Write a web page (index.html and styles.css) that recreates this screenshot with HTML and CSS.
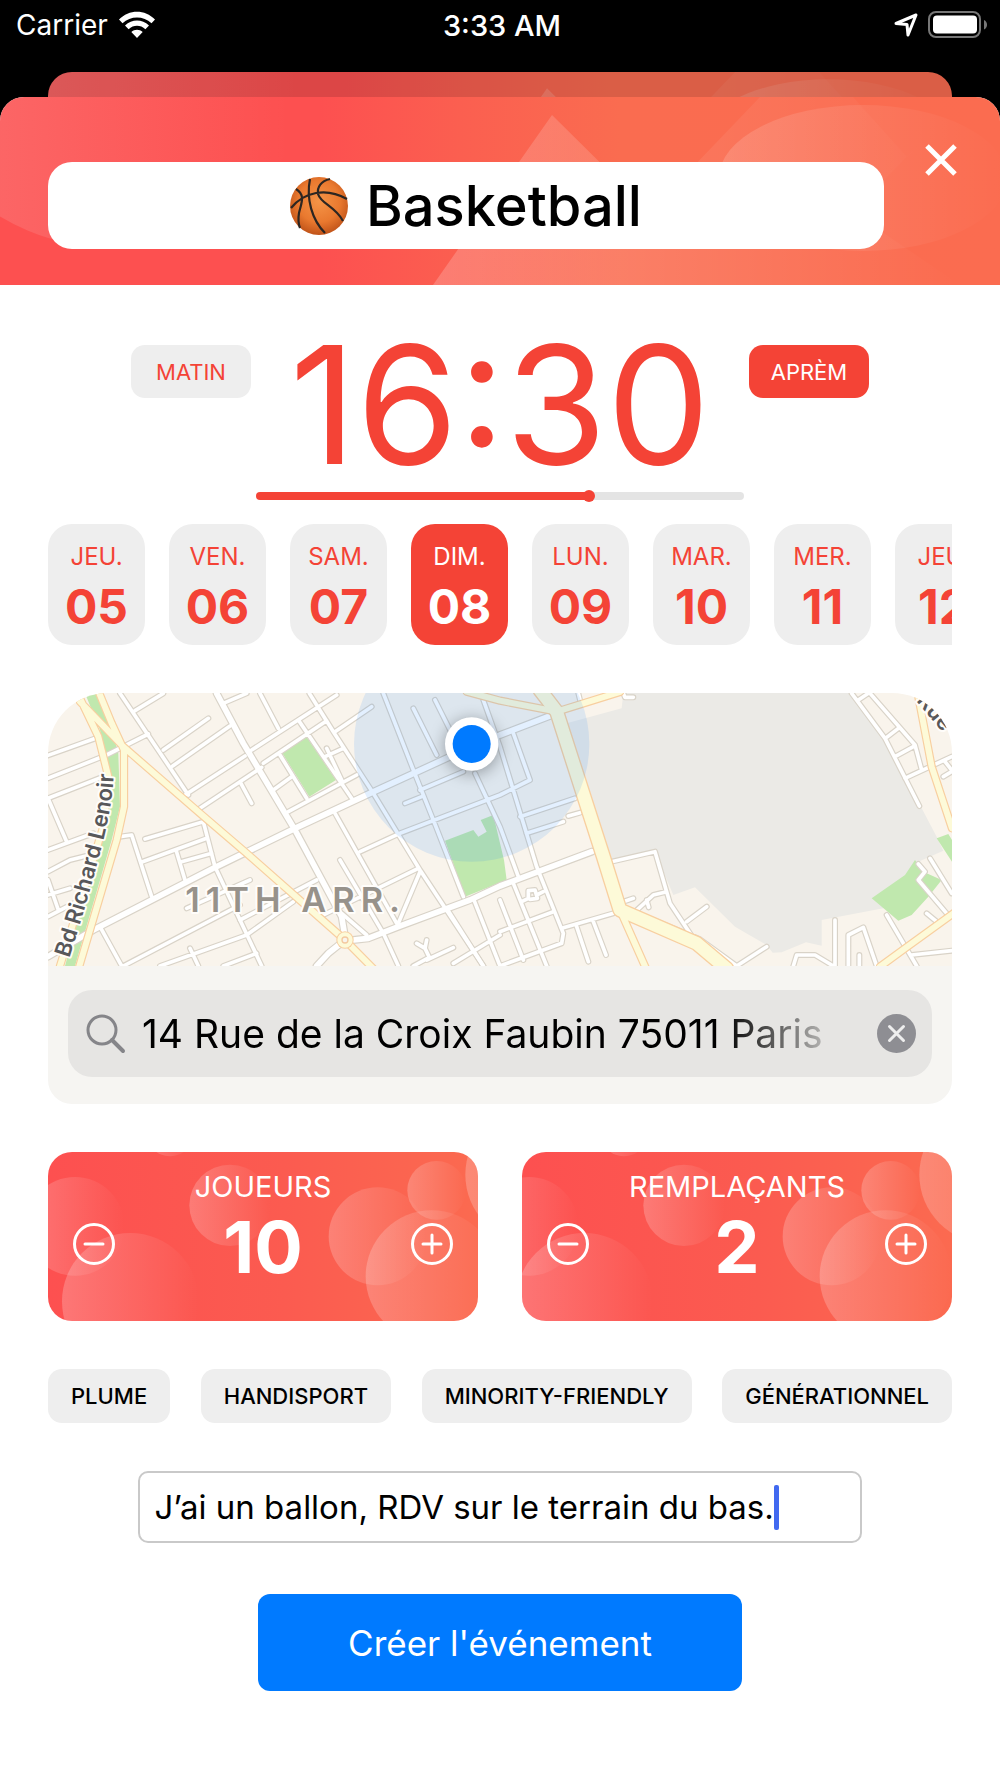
FILE: index.html
```html
<!DOCTYPE html>
<html lang="fr">
<head>
<meta charset="utf-8">
<meta name="viewport" content="width=device-width, initial-scale=1">
<title>Créer un événement</title>
<link rel="stylesheet" href="styles.css">
</head>
<body>
<svg class="defs" aria-hidden="true">
  <defs>
    <linearGradient id="base"><stop offset="0" stop-color="#fd5050"/><stop offset=".32" stop-color="#fd5050"/><stop offset=".46" stop-color="#fb5f50"/><stop offset=".62" stop-color="#fa6c50"/><stop offset="1" stop-color="#fb6c50"/></linearGradient>
    <linearGradient id="sheen"><stop offset="0" stop-color="#fff" stop-opacity=".22"/><stop offset="1" stop-color="#fff" stop-opacity="0"/></linearGradient>
    <linearGradient id="haze" gradientUnits="userSpaceOnUse" x1="0" y1="0" x2="290" y2="0"><stop offset="0" stop-color="#f4f4f4" stop-opacity=".13"/><stop offset="1" stop-color="#f4f4f4" stop-opacity="0"/></linearGradient>
    <linearGradient id="soft"><stop offset="0" stop-color="#fff" stop-opacity=".08"/><stop offset="1" stop-color="#fff" stop-opacity="0"/></linearGradient>
    <linearGradient id="glow"><stop offset="0" stop-color="#fff" stop-opacity=".15"/><stop offset="1" stop-color="#fff" stop-opacity="0"/></linearGradient>
    <linearGradient id="slope" gradientUnits="userSpaceOnUse" x1="433" y1="0" x2="960" y2="0"><stop offset="0" stop-color="#fff" stop-opacity=".2"/><stop offset="1" stop-color="#fff" stop-opacity="0"/></linearGradient>
    <symbol id="banner" viewBox="0 0 1000 188" preserveAspectRatio="xMidYMin slice">
      <rect width="1000" height="188" fill="url(#base)"/>
      <circle cx="110" cy="-64" r="214" fill="url(#haze)"/>
      <path d="M552 18L433 188H960L860 120H655Z" fill="url(#slope)"/>
      <path d="M760 0L645 120H848L965 0L907 60L853 0Z" fill="url(#soft)"/>
      <ellipse cx="863" cy="81" rx="144" ry="73" fill="url(#glow)"/>
    </symbol>
    <g id="bubbles" fill="url(#sheen)">
      <circle cx="105" cy="260" r="148"/>
      <circle cx="271" cy="485" r="205"/>
      <circle cx="390" cy="-20" r="70"/>
      <circle cx="570" cy="197" r="122"/>
      <circle cx="1013" cy="290" r="147"/>
      <circle cx="1190" cy="152" r="88"/>
      <circle cx="1175" cy="410" r="198"/>
      <circle cx="1482" cy="105" r="206"/>
    </g>
  </defs>
</svg>

<div class="status">
  <div class="status-left">
    <span>Carrier</span>
    <svg width="38" height="28" viewBox="0 0 38 28" aria-hidden="true">
      <path fill="#fff" d="M1 8.500C11-2 27-2 37 8.500L33.500 12.200C25.500 4.500 12.500 4.500 4.500 12.200ZM7 14.600C14 7.800 24 7.800 31 14.600L27.400 18.200C22.500 13.600 15.500 13.600 10.600 18.200ZM13.300 21C16.600 17.900 21.400 17.900 24.700 21L19 27Z"/>
    </svg>
  </div>
  <time class="status-time">3:33 AM</time>
  <div class="status-right">
    <svg width="24" height="24" viewBox="0 0 24 24" aria-hidden="true"><path d="M2 10.500L22 2L14 22L13 11.500Z" fill="none" stroke="#fff" stroke-width="3" stroke-linejoin="round"/></svg>
    <svg width="60" height="28" viewBox="0 0 60 28" aria-hidden="true"><rect x="1" y="1" width="51" height="25" rx="7" fill="none" stroke="#777" stroke-width="2"/><rect x="5" y="4.500" width="44" height="18" rx="4" fill="#fff"/><path d="M56 9c4 1.500 4 8 0 9.500z" fill="#777"/></svg>
  </div>
</div>

<div class="sheet-behind"><svg class="art" aria-hidden="true"><use href="#banner"/></svg></div>

<div class="sheet">
  <header class="sheet-head">
    <svg class="art" aria-hidden="true"><use href="#banner"/></svg>
    <h1 class="title">
      <svg width="58" height="58" viewBox="0 0 58 58" aria-hidden="true">
        <defs><radialGradient id="ball" cx=".5" cy=".42" r=".6"><stop offset="0" stop-color="#f59447"/><stop offset=".6" stop-color="#e9792f"/><stop offset="1" stop-color="#bd5017"/></radialGradient></defs>
        <circle cx="29" cy="29" r="29" fill="url(#ball)"/>
        <path fill="none" stroke="#2c2622" stroke-width="2.200" d="M1 31C14 15 36 10 57 22M20 2C16 22 22 43 35 56M40 2C31 4 27 10 28 17C31 27 45 29 53 44M6 12C16 18 11 27 9 36C8 42 8 46 10 51"/>
      </svg>
      <span>Basketball</span>
    </h1>
    <button class="close" type="button" aria-label="Fermer">
      <svg width="32" height="32" viewBox="0 0 32 32" aria-hidden="true"><path d="M2 2L30 30M30 2L2 30" stroke="#fff" stroke-width="5"/></svg>
    </button>
  </header>

  <main class="form">
    <section class="when">
      <button class="half" type="button" aria-pressed="false">MATIN</button>
      <time class="clock">16:30</time>
      <button class="half selected" type="button" aria-pressed="true">APRÈM</button>
    </section>
    <input class="slider" type="range" min="0" max="24" step="0.5" value="16.5" aria-label="Heure">

    <div class="days">
      <button class="day" type="button"><span>JEU.</span><b>05</b></button>
      <button class="day" type="button"><span>VEN.</span><b>06</b></button>
      <button class="day" type="button"><span>SAM.</span><b>07</b></button>
      <button class="day selected" type="button" aria-pressed="true"><span>DIM.</span><b>08</b></button>
      <button class="day" type="button"><span>LUN.</span><b>09</b></button>
      <button class="day" type="button"><span>MAR.</span><b>10</b></button>
      <button class="day" type="button"><span>MER.</span><b>11</b></button>
      <button class="day" type="button"><span>JEU.</span><b>12</b></button>
    </div>

    <section class="place">
      <svg class="map" viewBox="24 39 2712 819" preserveAspectRatio="xMidYMid slice" role="img" aria-label="Plan du 11e arrondissement">
        <defs>
          <g id="minor">
            <path d="M240 40L445 345M285 92L370 40M24 226L175 172M24 295L200 225L325 162M24 355L190 290M370 210L505 115M398 258L570 138M435 345L615 228M480 385L665 262M550 70L620 40M660 40L715 145M635 210L890 45M670 250L860 122M808 40L880 155L1000 340L1140 570L1330 858M885 155L995 80M775 120L935 355M720 225L800 355M860 205L905 300M855 230L910 205M745 395L950 285M700 330L755 290M600 305L635 370M315 477L490 425L525 560L665 858M308 545L500 475M425 545L515 520M408 510L435 600M240 470L275 465L335 650"/>
            <path d="M24 355L80 485M24 510L160 460M24 575L90 540L150 525M24 600L55 690M24 645L90 625M24 710L110 665M250 858L600 675M180 740L245 858M440 685L630 600M360 858L620 765L760 665M600 720L830 600M450 805L475 858M550 858L650 820M885 400L1070 730M900 540L1030 760L1075 858M905 700L980 765M960 515L1080 460L1380 345L1470 300L1420 160M840 710L1135 565M1140 575L1075 730M1120 85L1190 225M1185 60L1260 210M1030 40L1120 270L1180 420L1270 650M1305 280L1380 440L1435 590M1330 60L1380 200L1490 560L1570 760L1565 790L1380 858M1140 330L1270 275M1095 370L1145 350M1300 655L1380 858M1220 685L1330 858M1160 840L1240 803M1240 850L1380 765M1130 790L1155 805L1160 780M1155 805L1168 832L1120 858"/>
            <path transform="translate(1380 0)" d="M60 410L225 355M80 460L190 425M205 408L240 398M0 660L70 840M40 610L140 858M0 755L160 695M65 665L85 655L85 632L105 630L112 655L90 658M110 645L130 635M185 745L340 700M230 740L265 845M280 725L318 825M335 545L465 515L510 670L580 775M370 665L400 655M400 700L460 645L500 635M440 660L446 682M560 725L620 680M400 695L600 778L710 858L800 800M1005 720V858M1045 858V765L1090 742L1130 858M1078 825V858M880 858L890 825H945L1000 858M1055 40L1155 175L1258 378M1110 40L1245 195L1265 270M1075 60L1105 40M1160 172L1195 145M1185 230L1240 200M1215 295L1355 230M1330 290L1355 275M1335 245L1355 270M370 40L375 52H400M1290 535L1355 640M1255 552L1275 575L1255 600L1340 700M1160 705L1250 858M1235 825L1355 812M1280 700L1310 725M235 40L240 60"/>
          </g>
          <g id="medium">
            <path d="M24 830L160 750L520 565L765 445L990 340L1230 230L1380 165L1550 100M530 40L610 190L765 450L905 710L915 770M940 780L985 775L1075 740L1290 660L1380 618L1655 515M915 780L865 820L830 858"/>
          </g>
          <g id="major">
            <path d="M120 55L175 170L205 290L190 440L60 858M178 40L215 130L252 210V380L230 480L118 858M120 65L250 200L480 400L620 520L915 780L1000 866M1280 35L1380 62L1550 95L1740 36M2635 50L2675 260L2736 445M2740 700L2595 805L2520 860M1740 690L1820 870"/>
          </g>
          <g id="artery">
            <path d="M1500 30L1550 95L1690 530L1740 690L1970 790L2060 866"/>
          </g>
        </defs>
        <rect class="land" x="24" y="39" width="2712" height="819"/>
        <path class="estate" transform="translate(1380 0)" d="M370 38H1050L1155 175L1310 470L1330 512L1255 545L1150 685L965 720V797L918 787L845 817L818 818L800 795L705 740L585 622L520 645L465 515L330 545L200 130L365 85Z"/>
        <path class="park" d="M135 40H178L210 130L235 220L240 380L215 480L105 858H75L170 500L215 300L180 150ZM727 220L800 170L888 300L808 350ZM1215 482L1300 450L1315 470L1340 455L1322 420L1360 405L1392 540L1400 600L1275 650ZM2495 655L2595 585L2625 540L2650 575L2705 600L2665 650L2615 705L2575 722ZM2690 475L2725 462L2736 480V545Z"/>
        <use class="minor-edge" href="#minor"/><use class="medium-edge" href="#medium"/>
        <use class="minor-fill" href="#minor"/><use class="medium-fill" href="#medium"/>
        <use class="major-edge" href="#major"/><use class="artery-edge" href="#artery"/>
        <use class="major-fill" href="#major"/><use class="artery-fill" href="#artery"/>
        <circle class="roundabout-edge" cx="915" cy="780" r="26"/>
        <circle class="roundabout" cx="915" cy="780" r="18"/>
        <circle class="roundabout-core" cx="915" cy="780" r="9"/>
        <circle class="accuracy" cx="1295" cy="192" r="353"/>
        <path id="boulevard" d="M88 835Q150 640 190 480T218 220" fill="none"/>
        <text class="street"><textPath href="#boulevard">Bd Richard Lenoir</textPath></text>
        <text class="street" transform="translate(2628 62) rotate(50)">Rue</text>
        <text class="district" x="436" y="697">11TH ARR.</text>
        <circle class="pin-ring" cx="1295" cy="192" r="80"/>
        <circle class="pin" cx="1295" cy="192" r="57"/>
      </svg>
      <div class="search-panel">
        <div class="search">
          <svg width="40" height="40" viewBox="0 0 40 40" aria-hidden="true"><circle cx="16" cy="16" r="14" fill="none" stroke="#858589" stroke-width="3"/><path d="M26 26L37 37" stroke="#858589" stroke-width="4" stroke-linecap="round"/></svg>
          <input class="address" type="text" aria-label="Adresse" value="14 Rue de la Croix Faubin 75011 Paris">
          <button class="clear" type="button" aria-label="Effacer"><svg width="39" height="39" viewBox="0 0 39 39" aria-hidden="true"><circle cx="19.500" cy="19.500" r="19.500" fill="#8e8e93"/><path d="M12.500 12.500L26.500 26.500M26.500 12.500L12.500 26.500" stroke="#eee" stroke-width="3" stroke-linecap="round"/></svg></button>
        </div>
      </div>
    </section>

    <div class="counters">
      <section class="counter">
        <svg class="art" viewBox="24 37 1290 507" preserveAspectRatio="xMidYMid slice" aria-hidden="true"><use href="#bubbles"/></svg>
        <button class="step" type="button" aria-label="Moins de joueurs"><svg width="42" height="42" viewBox="0 0 42 42" aria-hidden="true"><circle cx="21" cy="21" r="19.500"/><path d="M12 21H30"/></svg></button>
        <div class="amount"><h2>JOUEURS</h2><output>10</output></div>
        <button class="step" type="button" aria-label="Plus de joueurs"><svg width="42" height="42" viewBox="0 0 42 42" aria-hidden="true"><circle cx="21" cy="21" r="19.500"/><path d="M12 21H30M21 12V30"/></svg></button>
      </section>
      <section class="counter">
        <svg class="art" viewBox="84 37 1290 507" preserveAspectRatio="xMidYMid slice" aria-hidden="true"><use href="#bubbles"/></svg>
        <button class="step" type="button" aria-label="Moins de remplaçants"><svg width="42" height="42" viewBox="0 0 42 42" aria-hidden="true"><circle cx="21" cy="21" r="19.500"/><path d="M12 21H30"/></svg></button>
        <div class="amount"><h2>REMPLAÇANTS</h2><output>2</output></div>
        <button class="step" type="button" aria-label="Plus de remplaçants"><svg width="42" height="42" viewBox="0 0 42 42" aria-hidden="true"><circle cx="21" cy="21" r="19.500"/><path d="M12 21H30M21 12V30"/></svg></button>
      </section>
    </div>

    <div class="tags">
      <button class="tag" type="button">PLUME</button>
      <button class="tag" type="button">HANDISPORT</button>
      <button class="tag" type="button">MINORITY-FRIENDLY</button>
      <button class="tag" type="button">GÉNÉRATIONNEL</button>
    </div>

    <div class="note">
      <input class="note-input" type="text" aria-label="Commentaire" value="J’ai un ballon, RDV sur le terrain du bas."><span class="caret"></span>
    </div>

    <button class="submit" type="submit">Créer l'événement</button>
  </main>
</div>
</body>
</html>
```
FILE: styles.css
```css
:root {
  --red: #f44336;
  --grey: #eeeeee;
  --blue: #007aff;
}

* { box-sizing: border-box; }

body {
  margin: 0;
  background: #000;
  color: #000;
  font-family: Inter, "Liberation Sans", sans-serif;
}

button, input {
  margin: 0;
  padding: 0;
  border: 0;
  background: none;
  color: inherit;
  font: inherit;
}

h1, h2 { margin: 0; font-weight: 400; }
svg { display: block; flex: none; }
.defs { position: absolute; width: 0; height: 0; }

/* Decorative layer behind a header or card */
.art {
  position: absolute;
  inset: 0;
  width: 100%;
  height: 100%;
}

/* Status bar */
.status {
  display: grid;
  grid-template-columns: 1fr auto 1fr;
  align-items: center;
  height: 50px;
  margin-bottom: 22px;
  padding: 0 12px 0 16px;
  color: #fff;
  font-size: 28px;
}
.status-left, .status-right { display: flex; align-items: center; gap: 10px; }
.status-right { justify-content: flex-end; }
.status-time { font-size: 29px; font-weight: 500; }

/* Sheets */
.sheet-behind {
  position: relative;
  height: 25px;
  margin: 0 48px;
  border-radius: 24px 24px 0 0;
  overflow: hidden;
  filter: brightness(.87);
}
.sheet-behind .art { height: 170px; }
.sheet {
  min-height: calc(100vh - 97px);
  border-radius: 24px 24px 0 0;
  background: #fff;
  overflow: hidden;
}
.sheet-head {
  position: relative;
  display: flex;
  align-items: flex-start;
  padding: 65px 43px 36px 48px;
}
.title {
  position: relative;
  flex: 1;
  display: flex;
  align-items: center;
  justify-content: center;
  gap: 18px;
  height: 87px;
  border-radius: 24px;
  background: #fff;
  font-size: 56px;
  font-weight: 500;
}
.close { position: relative; margin: -18px 0 0 41px; }

/* Form */
.form {
  display: flex;
  flex-direction: column;
  padding: 60px 48px 87px;
}
.selected { background: var(--red) !important; color: #fff !important; }

.when {
  display: flex;
  justify-content: space-between;
  align-items: flex-start;
  width: 100%;
  max-width: 738px;
  margin: 0 auto;
}
.half {
  width: 120px;
  height: 53px;
  border-radius: 14px;
  background: var(--grey);
  color: var(--red);
  font-size: 22px;
}
.clock {
  color: var(--red);
  font-size: 164px;
  font-weight: 400;
  line-height: 120px;
}
.slider {
  appearance: none;
  align-self: center;
  width: 54%;
  height: 12px;
  margin: 25px 0 22px;
}
.slider::-webkit-slider-runnable-track {
  height: 8px;
  border-radius: 4px;
  background: linear-gradient(to right, var(--red) 68%, #e4e4e4 68%);
}
.slider::-webkit-slider-thumb {
  appearance: none;
  width: 12px;
  height: 12px;
  margin-top: -2px;
  border-radius: 50%;
  background: var(--red);
}

.days { display: flex; gap: 24px; overflow: hidden; }
.day {
  flex: none;
  display: flex;
  flex-direction: column;
  align-items: center;
  width: 97px;
  height: 121px;
  padding-top: 17px;
  border-radius: 24px;
  background: var(--grey);
  color: var(--red);
}
.day span { font-size: 24px; line-height: 32px; }
.day b { font-size: 48px; line-height: 68px; }

/* Place */
.place {
  margin-top: 48px;
  border-radius: 60px 60px 24px 24px;
  overflow: hidden;
}
.map { width: 100%; height: 273px; }
.land { fill: #f9f4ec; }
.estate { fill: #ebeae6; }
.park { fill: #c0e8ae; }
.map use { fill: none; stroke-linejoin: round; stroke-linecap: round; }
.minor-edge { stroke: #d9d3c8; stroke-width: 18; }
.minor-fill { stroke: #fff; stroke-width: 11; }
.medium-edge { stroke: #d9d3c8; stroke-width: 24; }
.medium-fill { stroke: #fff; stroke-width: 17; }
.major-edge { stroke: #f8cfa0; stroke-width: 25; }
.major-fill { stroke: #fdfad8; stroke-width: 18; }
.artery-edge { stroke: #f8cfa0; stroke-width: 46; }
.artery-fill { stroke: #fdfad8; stroke-width: 38; }
.roundabout-edge { fill: #f8cfa0; }
.roundabout { fill: #fdfad8; stroke: #fdfad8; stroke-width: 10; }
.roundabout-core { fill: #f9f4ec; stroke: #f3c9a0; stroke-width: 4; }
.accuracy { fill: #007aff; fill-opacity: .11; }
.street, .district {
  stroke: #fffdfa;
  stroke-width: 12px;
  stroke-linejoin: round;
  paint-order: stroke;
}
.street { fill: #58585a; font-size: 67px; font-weight: 600; }
.district { fill: #97928b; font-size: 103px; font-weight: 600; letter-spacing: 18px; }
.pin-ring { fill: #fff; filter: drop-shadow(0 8px 24px rgba(0, 0, 0, .35)); }
.pin { fill: #007aff; }

.search-panel { padding: 24px 20px 27px; background: #f6f5f2; }
.search {
  display: flex;
  align-items: center;
  height: 87px;
  padding: 0 16px 0 18px;
  border-radius: 24px;
  background: #e6e5e3;
}
.address {
  flex: 1;
  min-width: 0;
  margin: 0 52px 0 16px;
  font-size: 39px;
  -webkit-mask-image: linear-gradient(to right, #000 85%, transparent 104%);
  mask-image: linear-gradient(to right, #000 85%, transparent 104%);
}

/* Player counters */
.counters {
  display: grid;
  grid-template-columns: 1fr 1fr;
  gap: 44px;
  margin-top: 48px;
}
.counter {
  position: relative;
  display: flex;
  justify-content: space-between;
  height: 169px;
  padding: 0 25px;
  border-radius: 24px;
  background: linear-gradient(to right, #fd5050, #fb5b50 55%, #fb6a50);
  color: #fff;
  overflow: hidden;
}
.step { position: relative; align-self: flex-start; margin-top: 71px; }
.step svg { fill: none; stroke: #fff; stroke-width: 3; stroke-linecap: round; }
.amount {
  position: relative;
  display: flex;
  flex-direction: column;
  align-items: center;
  padding-top: 17px;
}
.amount h2 { font-size: 29px; line-height: 36px; }
.amount output { font-size: 72px; font-weight: 700; line-height: 84px; }

.tags {
  display: flex;
  justify-content: space-between;
  margin-top: 48px;
}
.tag {
  height: 54px;
  padding: 0 23px;
  border-radius: 14px;
  background: var(--grey);
  font-size: 22px;
  font-weight: 500;
}

.note {
  align-self: center;
  display: flex;
  align-items: center;
  width: 80%;
  height: 72px;
  margin-top: 48px;
  padding: 0 14px;
  border: 2px solid #c9c9c9;
  border-radius: 10px;
}
.note-input { field-sizing: content; font-size: 33px; }
.caret { width: 5px; height: 45px; border-radius: 2px; background: #4169f0; }

.submit {
  align-self: center;
  width: 484px;
  max-width: 100%;
  height: 97px;
  margin-top: 51px;
  border-radius: 12px;
  background: var(--blue);
  color: #fff;
  font-size: 35px;
}
```
